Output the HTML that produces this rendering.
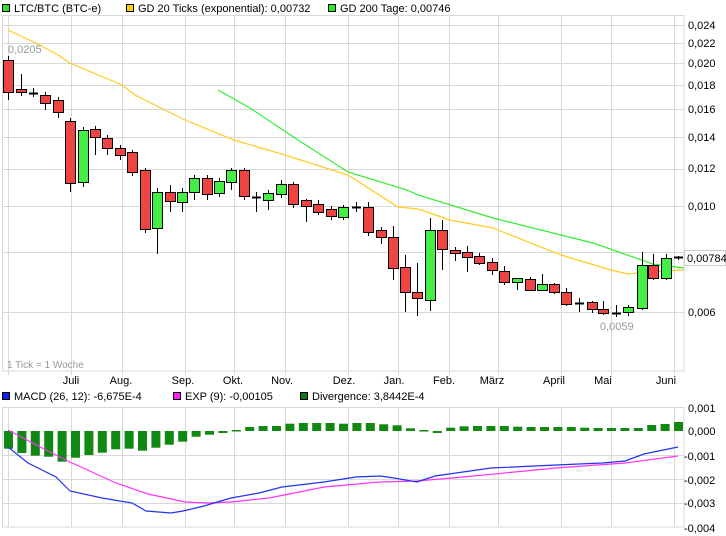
<!DOCTYPE html>
<html><head><meta charset="utf-8"><style>
html,body{margin:0;padding:0;background:#fff;}
svg{display:block;font-family:"Liberation Sans",sans-serif;}
</style></head><body>
<svg id="s" width="726" height="536" xmlns="http://www.w3.org/2000/svg">
<g font-size="11" fill="#000">
<rect x="2.5" y="4.5" width="7" height="7" fill="#33dd33" stroke="#000"/>
<text x="14" y="12">LTC/BTC (BTC-e)</text>
<rect x="126.5" y="4.5" width="7" height="7" fill="#ffcc00" stroke="#000"/>
<text x="138" y="12">GD 20 Ticks (exponential): 0,00732</text>
<rect x="328.5" y="4.5" width="7" height="7" fill="#22ee22" stroke="#000"/>
<text x="340" y="12">GD 200 Tage: 0,00746</text>
<rect x="2.5" y="392.5" width="7" height="7" fill="#1122ee" stroke="#000"/>
<text x="14" y="400">MACD (26, 12): -6,675E-4</text>
<rect x="173.5" y="392.5" width="7" height="7" fill="#ff22ff" stroke="#000"/>
<text x="185" y="400">EXP (9): -0,00105</text>
<rect x="300.5" y="392.5" width="7" height="7" fill="#117711" stroke="#000"/>
<text x="312" y="400">Divergence: 3,8442E-4</text>
</g>
<g id="grid" stroke="#d8d8d8" stroke-width="1"></g>
<g id="main"></g>
<g font-size="11" fill="#000">
<text x="688" y="29">0,024</text><text x="688" y="47">0,022</text><text x="688" y="67">0,020</text>
<text x="688" y="89">0,018</text><text x="688" y="113">0,016</text><text x="688" y="141">0,014</text>
<text x="688" y="172">0,012</text><text x="688" y="210">0,010</text><text x="688" y="316">0,006</text>
<text x="688" y="412">0,001</text><text x="688" y="435">0,000</text><text x="684" y="460">-0,001</text>
<text x="684" y="484">-0,002</text><text x="684" y="507">-0,003</text><text x="684" y="532">-0,004</text>
<g text-anchor="middle">
<text x="71" y="384">Juli</text><text x="121" y="384">Aug.</text><text x="183" y="384">Sep.</text>
<text x="233" y="384">Okt.</text><text x="282" y="384">Nov.</text><text x="344" y="384">Dez.</text>
<text x="394" y="384">Jan.</text><text x="444" y="384">Feb.</text><text x="492" y="384">März</text>
<text x="554" y="384">April</text><text x="603" y="384">Mai</text><text x="666" y="384">Juni</text>
</g>
<text x="8" y="53" fill="#999">0,0205</text>
<text x="600" y="330" fill="#999">0,0059</text>
<text x="7" y="368" fill="#999" font-size="10">1 Tick = 1 Woche</text>
<rect x="684.5" y="250.5" width="41" height="15" fill="#fff" stroke="#ccc"/>
<text x="687" y="262">0,00784</text>
</g>
</svg>
<script>
var NS="http://www.w3.org/2000/svg",g=document.getElementById('grid'),m=document.getElementById('main');
function el(p,t,a){var e=document.createElementNS(NS,t);for(var k in a)e.setAttribute(k,a[k]);p.appendChild(e);return e;}
var vx=[8,71,122,185,234,285,348,398,449,498,561,611,674];
vx.forEach(function(x){el(g,'line',{x1:x+.5,y1:16,x2:x+.5,y2:371});el(g,'line',{x1:x+.5,y1:407,x2:x+.5,y2:527});el(g,'line',{x1:x+.5,y1:371,x2:x+.5,y2:375});});
[25,43,63,85,109,137,169,206,252,312].forEach(function(y){el(g,'line',{x1:2,y1:y+.5,x2:684,y2:y+.5});});
[455,479,503].forEach(function(y){el(g,'line',{x1:2,y1:y+.5,x2:684,y2:y+.5});});
el(g,'rect',{x:2.5,y:15.5,width:681.5,height:355.5,fill:'none'});
el(g,'rect',{x:2.5,y:407.5,width:681.5,height:119.5,fill:'none'});
function pl(pts,c){el(m,'polyline',{points:pts,fill:'none',stroke:c,'stroke-width':1.2});}
pl("8,30 40,45 58,55 70,63 122,85 135,95 185,120 234,140 285,155 348,175 398,207 418,209 450,220 493,228 561,255 611,270 628,274 645,272 684,270","#ffcc22");
pl("218,90 250,108 298,140 348,172 407,190 418,195 493,218 593,243 653,264 684,268","#33ee33");
var C=[[8,'r',60,92,56,100],[21,'r',89,92,74,96],[33,'d',93,93,88,97],[45,'r',95,103,92,110],[58,'r',100,112,97,118],[70,'r',121,183,118,192],[83,'g',130,182,127,187],[95,'r',129,137,126,155],[107,'r',138,148,135,155],[120,'r',148,155,145,160],[132,'r',152,172,150,176],[145,'r',170,229,168,233],[157,'g',192,228,188,254],[170,'r',192,201,185,212],[182,'g',192,202,188,212],[194,'g',178,192,175,200],[207,'r',178,194,175,200],[219,'g',181,193,178,197],[231,'g',170,182,168,190],[244,'r',170,196,168,200],[256,'d',197,197,192,212],[268,'g',193,200,190,210],[281,'g',184,194,180,198],[293,'r',184,204,182,208],[306,'r',200,206,199,222],[318,'r',204,212,200,215],[331,'r',209,216,206,220],[343,'g',207,217,205,220],[356,'d',207,207,202,212],[368,'r',207,232,202,236],[381,'r',230,237,227,244],[393,'r',237,268,226,280],[405,'r',267,292,255,312],[417,'r',292,298,263,316],[430,'g',230,300,218,311],[442,'r',230,249,220,270],[455,'r',250,253,247,261],[467,'r',252,257,246,272],[479,'r',256,263,253,265],[492,'r',262,270,258,275],[504,'r',271,282,266,285],[517,'g',278,282,278,290],[530,'r',279,290,277,291],[542,'g',284,290,274,291],[554,'r',284,292,283,294],[566,'r',292,304,288,306],[579,'d',303,303,298,312],[592,'r',302,309,301,313],[603,'r',309,313,301,315],[616,'d',313,313,305,317],[628,'g',307,312,305,316],[642,'g',265,308,252,310],[653,'r',265,278,254,280],[666,'g',258,278,254,280],[678,'d',257,257,256,260]];
C.forEach(function(c){var x=c[0];el(m,'line',{x1:x+.5,y1:c[4],x2:x+.5,y2:c[5],stroke:'#000'});
if(c[1]=='d'){el(m,'line',{x1:x-4,y1:c[2]+.5,x2:x+5,y2:c[2]+.5,stroke:'#000','stroke-width':2});}
else el(m,'rect',{x:x-4.5,y:c[2]+.5,width:10,height:Math.max(2,c[3]-c[2]),fill:c[1]=='r'?'#ee4444':'#44ee44',stroke:'#000'});});
var H=[448.7,453,455.7,456.7,461.7,457.7,455,452.7,449.3,448.7,450.7,447.7,444.7,441.7,436.7,434.7,433,430,427,426,426,423.7,423,423,423,423.7,423,423,424.3,425.3,428.3,430,433,427.7,426.3,426,426,426,426.7,427,427,427,427,427.7,428,428,428,428,425,424,422];
var n=H.length;for(var i=0;i<n;i++){var x=8+i*(670/(n-1));var y=H[i],z=431;el(m,'rect',{x:x-4,y:Math.min(y,z),width:9,height:Math.max(1.5,Math.abs(y-z)),fill:'#118811'});}
pl("8,430 46,450 70,462 116,483 148,494 185,502 208,503 231,502 269,498 324,487 380,482 417,481 463,477 556,468 625,463 678,456","#ff33ff");
pl("8,447 28,463 56,477 70,491 102,498 132,503 146,511 171,513 183,511 204,506 231,498 259,493 282,487 324,482 356,477 380,476 394,478 417,482 435,476 463,472 491,468 556,465 602,463 625,461 644,454 678,447","#2233ee");
</script>
</body></html>
